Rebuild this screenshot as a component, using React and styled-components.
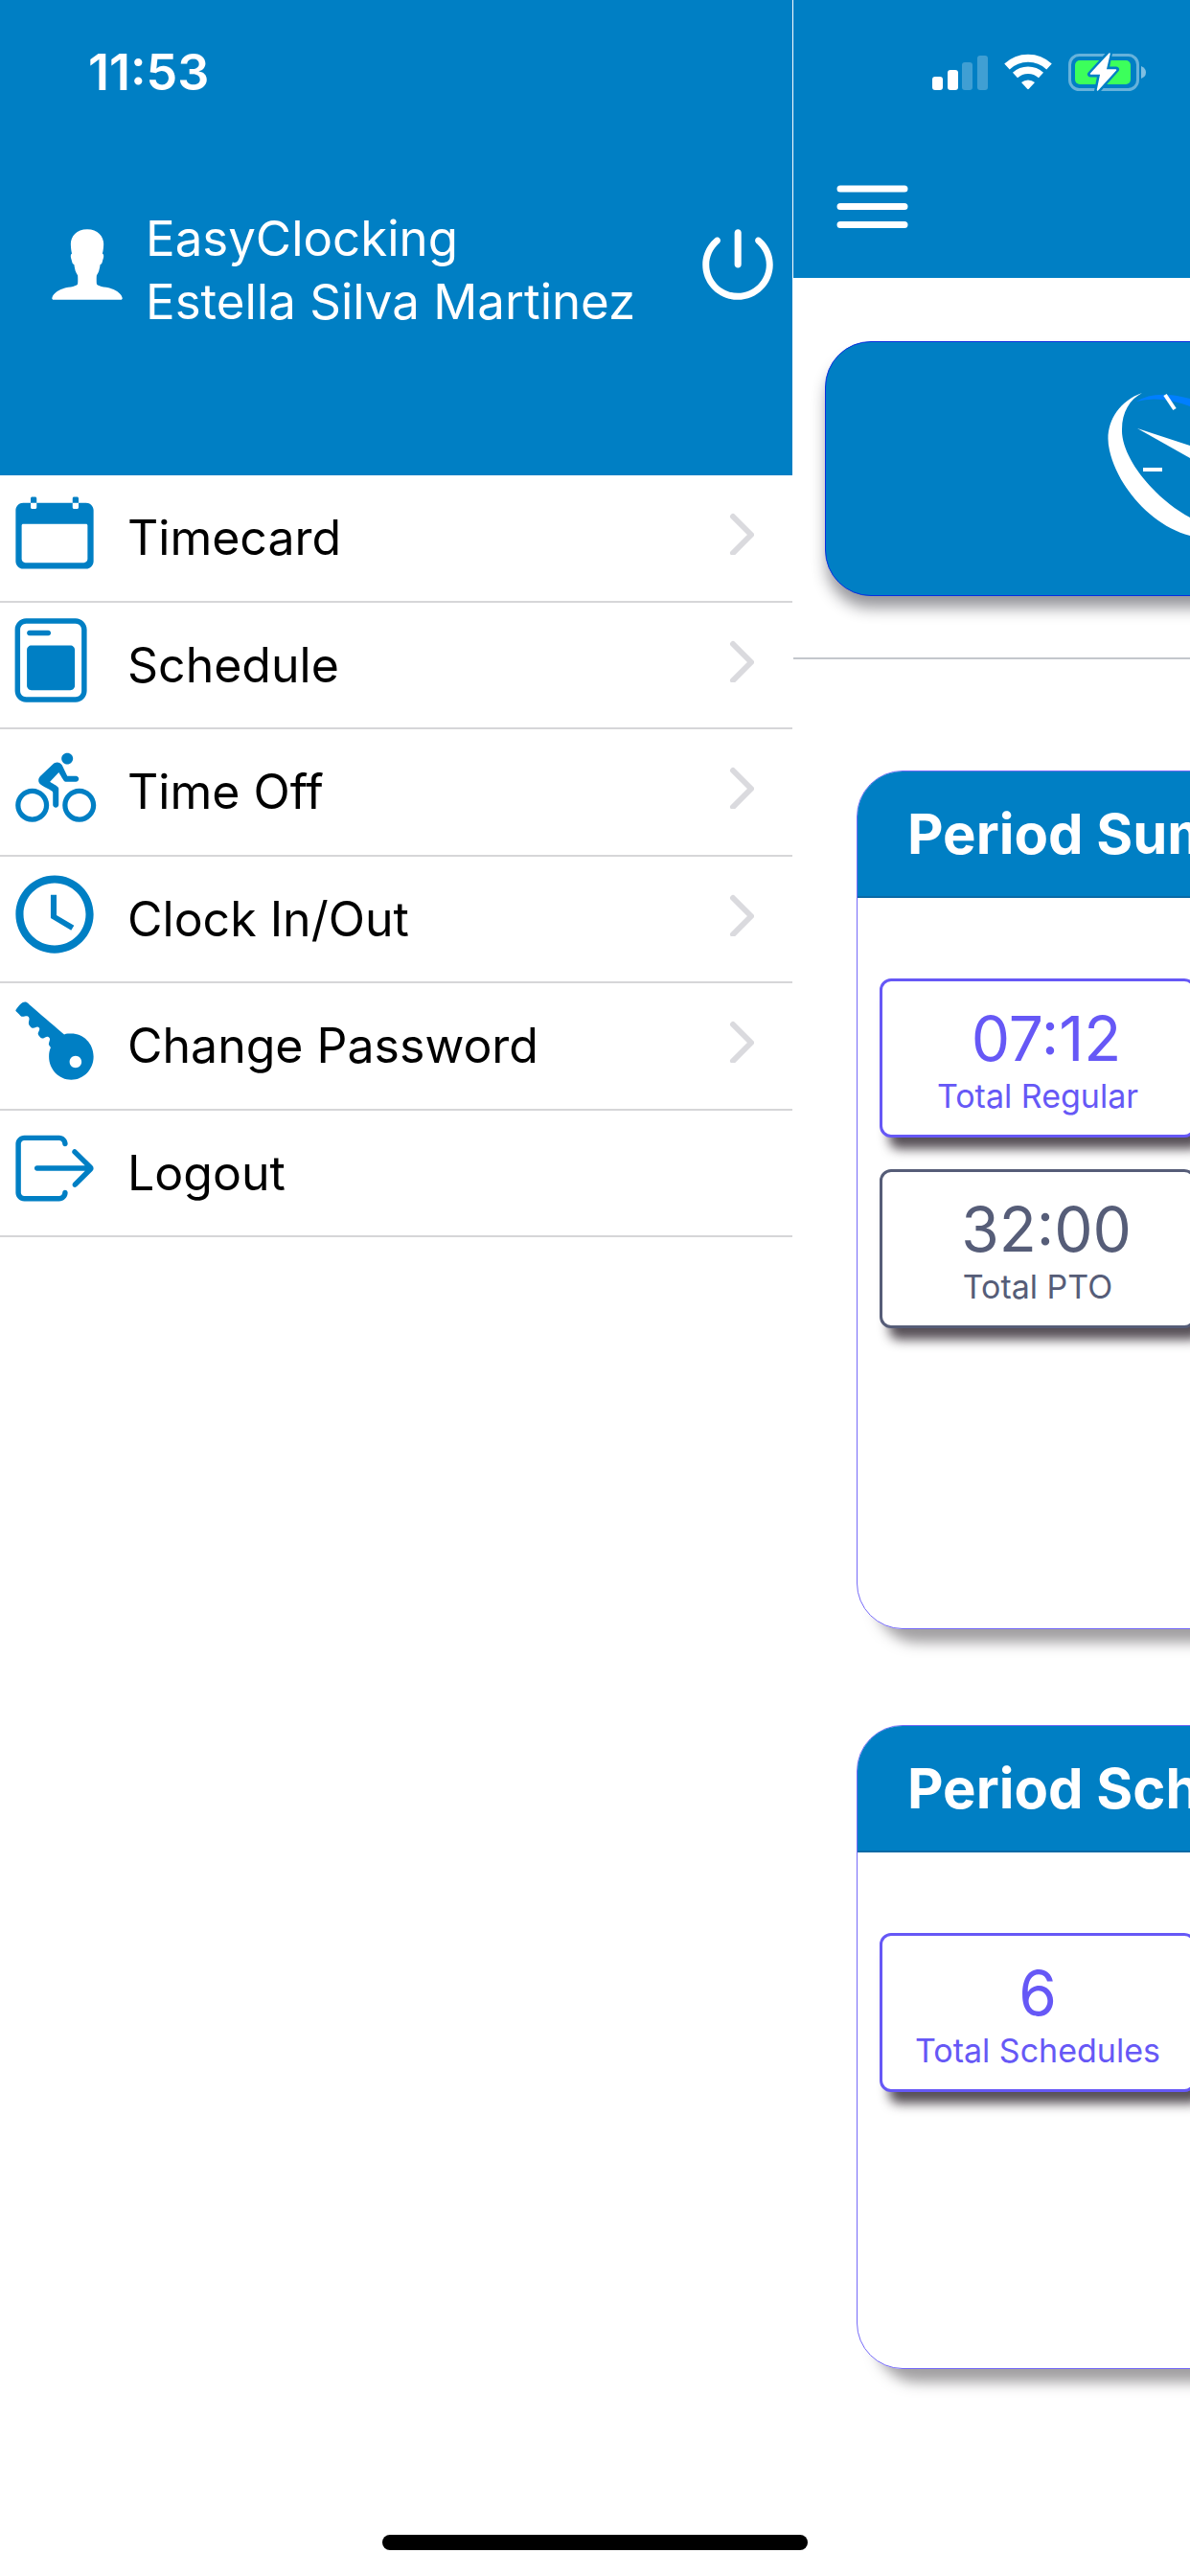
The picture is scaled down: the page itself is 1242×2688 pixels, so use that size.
import React from 'react';
import styled, { createGlobalStyle } from 'styled-components';
import {
    IoIosPerson,
    IoIosPower,
    IoIosCalendar,
    IoIosToday,
    IoIosBicycle,
    IoMdTime,
    IoIosKey,
    IoIosLogOut,
} from 'react-icons/io';

const BLUE = '#007fc4';
const PURPLE = '#6658f6';
const SLATE = '#565d78';

const GlobalStyle = createGlobalStyle`
    * {
        box-sizing: border-box;
    }

    body {
        margin: 0;
        background: #fff;
        font-family: Inter, 'Liberation Sans', sans-serif;
    }

    button {
        font: inherit;
        padding: 0;
        border: 0;
        background: none;
    }
`;

const Screen = styled.div`
    display: grid;
    grid-template-columns: 2fr 1fr;
    min-height: 100vh;
    overflow: hidden;
`;

// SIDE MENU
const SideMenu = styled.aside`
    min-width: 0;
    background: #fff;
    border-right: 1px solid #fff;
`;

const MenuHeader = styled.header`
    display: flex;
    flex-flow: column;
    height: 496px;
    background: ${BLUE};
    color: #fff;
`;

const Clock = styled.time`
    padding: 46px 0 0 92px;
    font-size: 52px;
    line-height: 60px;
    font-weight: 600;
`;

const Profile = styled.div`
    display: flex;
    align-items: center;
    padding: 110px 8px 0 42px;

    h1 {
        flex: 1;
        margin: 0 0 0 12px;
        font-size: 51px;
        line-height: 66px;
        font-weight: 400;
    }

    svg {
        margin-bottom: 12px;
    }
`;

const PowerButton = styled.button`
    display: flex;
    color: #fff;
`;

const MenuList = styled.ul`
    display: grid;
    grid-auto-rows: 1fr;
    min-height: 795px;
    margin: 0;
    padding: 0;
    list-style: none;
`;

const MenuItem = styled.li`
    display: flex;
    border-bottom: 2px solid #d6d6d8;
`;

const MenuLink = styled.a`
    flex: 1;
    display: flex;
    align-items: center;
    padding: 0 40px 0 7px;
    color: #000;
    font-size: 50px;
    line-height: 66px;
    text-decoration: none;

    span {
        flex: 1;
        margin-left: 26px;
    }

    svg {
        margin-bottom: 10px;
        color: ${BLUE};
    }

    svg, svg * {
        opacity: 1;
        fill-opacity: 1;
    }
`;

// DASHBOARD
const Dashboard = styled.main`
    min-width: 0;
    overflow: hidden;
`;

const Page = styled.div`
    width: 100vw;
`;

const TopBar = styled.header`
    height: 290px;
    background: ${BLUE};
`;

const StatusIcons = styled.div`
    display: flex;
    align-items: center;
    gap: 17px;
    padding: 55px 0 0 145px;
`;

const MenuButton = styled.button`
    display: flex;
    margin: 98px 0 0 45px;
`;

const LogoCard = styled.section`
    display: flex;
    justify-content: center;
    align-items: flex-start;
    height: 266px;
    margin: 66px 33px 64px;
    padding-top: 51px;
    background: ${BLUE};
    border: 1px solid #0a2ee0;
    border-radius: 48px;
    box-shadow: 0 14px 16px -2px rgba(20, 20, 30, 0.45);
`;

const Divider = styled.hr`
    margin: 0;
    border: 0;
    border-top: 2px solid #c3c7cc;
`;

const Cards = styled.div`
    display: grid;
    gap: 100px;
    padding: 116px 66px 200px;
`;

const PeriodCard = styled.section`
    min-height: ${props => props.$height};
    border: 1px solid #7569f8;
    border-radius: 48px;
    overflow: hidden;
    box-shadow: 16px 18px 14px -4px rgba(70, 65, 70, 0.5);

    h2 {
        margin: 0;
        padding: 32px 52px;
        background: ${BLUE};
        border-bottom: 2px solid #0a6aa6;
        color: #fff;
        font-size: 58px;
        line-height: 66px;
        font-weight: 700;
    }
`;

const Stats = styled.div`
    display: grid;
    grid-template-columns: repeat(3, 1fr);
    gap: 33px 36px;
    padding: 84px 23px;
`;

const Stat = styled.div`
    grid-column: 1;
    display: flex;
    flex-flow: column;
    align-items: center;
    height: 166px;
    padding-top: 20px;
    background: #fff;
    border: 3px solid ${props => props.$color};
    border-radius: 12px;
    box-shadow: 8px 14px 12px -2px rgba(30, 20, 30, 0.75);
    color: ${props => props.$color};

    strong {
        font-size: 64px;
        line-height: 80px;
        font-weight: 400;
        white-space: pre;
    }

    span {
        font-size: 34px;
        line-height: 40px;
    }
`;

const HomeIndicator = styled.div`
    position: fixed;
    bottom: 27px;
    left: 50%;
    width: 444px;
    height: 16px;
    margin-left: -222px;
    border-radius: 8px;
    background: #000;
`;

const Chevron = () => (
    <svg width="26" height="46" viewBox="0 0 26 46" fill="none" stroke="#dadade" strokeWidth="6" strokeLinecap="round" strokeLinejoin="round">
        <path d="M4 6 L23 25 L4 44" />
    </svg>
);

const Signal = () => (
    <svg width="58" height="38" viewBox="0 0 58 38" fill="#fff">
        <rect x="0" y="24" width="11" height="14" rx="3" />
        <rect x="16" y="17" width="11" height="21" rx="3" />
        <rect x="31" y="9" width="11" height="29" rx="3" opacity="0.25" />
        <rect x="47" y="2" width="11" height="36" rx="3" opacity="0.25" />
    </svg>
);

const Wifi = () => (
    <svg width="50" height="38" viewBox="0 0 50 38">
        <path d="M3 13.5 A32 32 0 0 1 47 13.5" fill="none" stroke="#fff" strokeWidth="8" />
        <path d="M11.5 22.5 A20 20 0 0 1 38.5 22.5" fill="none" stroke="#fff" strokeWidth="7.5" />
        <path d="M18 30 A11 11 0 0 1 32 30 L25.8 36.8 Q25 37.5 24.2 36.8 Z" fill="#fff" />
    </svg>
);

const Battery = () => (
    <svg width="82" height="40" viewBox="0 0 82 40">
        <rect x="1.5" y="2.5" width="71" height="36" rx="10" fill="none" stroke="#fff" strokeOpacity="0.4" strokeWidth="3" />
        <path d="M76 14 Q81 16 81 20.5 Q81 25 76 27 Z" fill="#fff" fillOpacity="0.5" />
        <rect x="7" y="8" width="58" height="25" rx="5" fill="#3cff5b" />
        <path d="M43 0.5 L23 22.5 H33.5 L30 40 L50 17.5 H39.5 Z" fill="#fff" stroke={BLUE} strokeWidth="6" strokeLinejoin="round" />
        <path d="M43 1 L23.5 22 H34 L30.5 39 L49.5 18 H39 Z" fill="#fff" stroke="#fff" strokeWidth="1.5" strokeLinejoin="round" />
    </svg>
);

const Burger = () => (
    <svg width="75" height="46" viewBox="0 0 75 46" stroke="#fff" strokeWidth="7" strokeLinecap="round">
        <path d="M4 4 H71 M4 22.5 H71 M4 41.5 H71" />
    </svg>
);

const LogoMark = () => (
    <svg width="586" height="170" viewBox="0 0 586 170">
        <path d="M30 11 Q50 -2 86 8 L120 20 V32 L86 16 Q54 4 30 11 Z" fill="#007fff" />
        <path d="M36 2 C8 12 -4 38 2 62 C10 98 44 140 86 151 L120 160 V146 L86 132 C50 113 14 70 15 40 C15 22 23 9 36 2 Z" fill="#fff" />
        <path d="M31 39 L120 68 V88 L86 70 Z" fill="#fff" />
        <path d="M60 4 L70 19" stroke="#fff" strokeWidth="4" />
        <path d="M37 82 H57" stroke="#fff" strokeWidth="4" />
    </svg>
);

const items = [
    { label: 'Timecard', Icon: IoIosCalendar, arrow: true },
    { label: 'Schedule', Icon: IoIosToday, viewBox: '20 0 512 512', arrow: true },
    { label: 'Time Off', Icon: IoIosBicycle, viewBox: '-17 -14 533 533', arrow: true },
    { label: 'Clock In/Out', Icon: IoMdTime, arrow: true },
    { label: 'Change Password', Icon: IoIosKey, arrow: true },
    { label: 'Logout', Icon: IoIosLogOut, arrow: false },
];

const App = () => (
    <Screen>
        <GlobalStyle />
        <SideMenu>
            <MenuHeader>
                <Clock>11:53</Clock>
                <Profile>
                    <IoIosPerson size={98} />
                    <h1>EasyClocking<br />Estella Silva Martinez</h1>
                    <PowerButton aria-label="Power"><IoIosPower size={98} /></PowerButton>
                </Profile>
            </MenuHeader>
            <nav>
                <MenuList>
                    {items.map(({ label, Icon, viewBox = '0 0 512 512', arrow }) => (
                        <MenuItem key={label}>
                            <MenuLink href="#">
                                <Icon size={100} viewBox={viewBox} />
                                <span>{label}</span>
                                {arrow && <Chevron />}
                            </MenuLink>
                        </MenuItem>
                    ))}
                </MenuList>
            </nav>
        </SideMenu>
        <Dashboard>
            <Page>
                <TopBar>
                    <StatusIcons>
                        <Signal />
                        <Wifi />
                        <Battery />
                    </StatusIcons>
                    <MenuButton aria-label="Menu"><Burger /></MenuButton>
                </TopBar>
                <LogoCard>
                    <LogoMark />
                </LogoCard>
                <Divider />
                <Cards>
                    <PeriodCard $height="896px">
                        <h2>Period Summary</h2>
                        <Stats>
                            <Stat $color={PURPLE}>
                                <strong>{' 07:12'}</strong>
                                <span>Total Regular</span>
                            </Stat>
                            <Stat $color={SLATE}>
                                <strong>{' 32:00'}</strong>
                                <span>Total PTO</span>
                            </Stat>
                        </Stats>
                    </PeriodCard>
                    <PeriodCard $height="672px">
                        <h2>Period Schedules</h2>
                        <Stats>
                            <Stat $color={PURPLE}>
                                <strong>6</strong>
                                <span>Total Schedules</span>
                            </Stat>
                        </Stats>
                    </PeriodCard>
                </Cards>
            </Page>
        </Dashboard>
        <HomeIndicator />
    </Screen>
);

export default App;
